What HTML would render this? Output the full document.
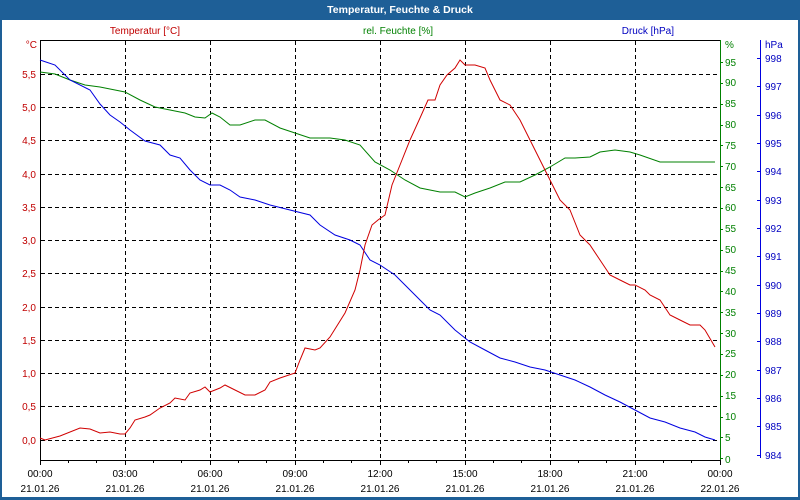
<!DOCTYPE html>
<html><head><meta charset="utf-8"><style>
html,body{margin:0;padding:0;width:800px;height:500px;overflow:hidden;background:#fff;}
</style></head><body>
<svg width="800" height="500" xmlns="http://www.w3.org/2000/svg" font-family="Liberation Sans, sans-serif" font-size="10">
<rect x="0" y="0" width="800" height="500" fill="#1e5f97"/>
<rect x="2" y="20" width="796" height="477" fill="#fff"/>
<text x="400" y="13" fill="#fff" font-weight="bold" text-anchor="middle" font-size="10.5">Temperatur, Feuchte &amp; Druck</text>
<text x="145" y="34" fill="#c00000" text-anchor="middle">Temperatur [°C]</text>
<text x="398" y="34" fill="#008000" text-anchor="middle">rel. Feuchte [%]</text>
<text x="674" y="34" fill="#0000c0" text-anchor="end">Druck [hPa]</text>
<g stroke="#000" stroke-dasharray="4,3" stroke-width="1">
<path d="M125.5 41V460M210.5 41V460M295.5 41V460M380.5 41V460M465.5 41V460M550.5 41V460M635.5 41V460"/>
<path d="M41 74.5H720M41 107.5H720M41 140.5H720M41 174.5H720M41 207.5H720M41 240.5H720M41 273.5H720M41 307.5H720M41 340.5H720M41 373.5H720M41 406.5H720M41 440.5H720"/>
</g>
<path d="M40.5 40.5H720.5M40.5 40V460.5H720" stroke="#000" fill="none"/>
<g stroke="#000"><path d="M40.5 460v5M68.5 460v3M96.5 460v3M125.5 460v5M153.5 460v3M181.5 460v3M210.5 460v5M238.5 460v3M266.5 460v3M295.5 460v5M323.5 460v3M351.5 460v3M380.5 460v5M408.5 460v3M436.5 460v3M465.5 460v5M493.5 460v3M521.5 460v3M550.5 460v5M578.5 460v3M606.5 460v3M635.5 460v5M663.5 460v3M691.5 460v3M720.5 460v5"/></g>
<path d="M720.5 40V460" stroke="#008000"/>
<path d="M760.5 40V458" stroke="#0000e0"/>
<g fill="#c00000" text-anchor="end">
<text x="37" y="48">°C</text>
<text x="36" y="78">5,5</text><text x="36" y="111">5,0</text><text x="36" y="144">4,5</text><text x="36" y="178">4,0</text><text x="36" y="211">3,5</text><text x="36" y="244">3,0</text><text x="36" y="277">2,5</text><text x="36" y="311">2,0</text><text x="36" y="344">1,5</text><text x="36" y="377">1,0</text><text x="36" y="410">0,5</text><text x="36" y="444">0,0</text>
</g>
<g fill="#008000"><text x="725" y="48">%</text>
<text x="725" y="66">95</text><text x="725" y="86">90</text><text x="725" y="107">85</text><text x="725" y="128">80</text><text x="725" y="149">75</text><text x="725" y="170">70</text><text x="725" y="191">65</text><text x="725" y="211">60</text><text x="725" y="232">55</text><text x="725" y="253">50</text><text x="725" y="274">45</text><text x="725" y="295">40</text><text x="725" y="316">35</text><text x="725" y="337">30</text><text x="725" y="357">25</text><text x="725" y="378">20</text><text x="725" y="399">15</text><text x="725" y="420">10</text><text x="725" y="441">5</text><text x="725" y="463">0</text></g>
<path stroke="#008000" d="M720 62.5h3M720 83.5h3M720 104.5h3M720 125.5h3M720 145.5h3M720 166.5h3M720 187.5h3M720 208.5h3M720 229.5h3M720 250.5h3M720 271.5h3M720 291.5h3M720 312.5h3M720 333.5h3M720 354.5h3M720 375.5h3M720 396.5h3M720 417.5h3M720 437.5h3M720 458.5h3"/>
<g fill="#0000c0"><text x="765" y="48">hPa</text>
<text x="765" y="62">998</text><text x="765" y="90">997</text><text x="765" y="119">996</text><text x="765" y="147">995</text><text x="765" y="175">994</text><text x="765" y="204">993</text><text x="765" y="232">992</text><text x="765" y="260">991</text><text x="765" y="289">990</text><text x="765" y="317">989</text><text x="765" y="345">988</text><text x="765" y="374">987</text><text x="765" y="402">986</text><text x="765" y="430">985</text><text x="765" y="459">984</text></g>
<path stroke="#0000e0" d="M757 58.5h3M757 86.5h3M757 115.5h3M757 143.5h3M757 171.5h3M757 200.5h3M757 228.5h3M757 256.5h3M757 285.5h3M757 313.5h3M757 341.5h3M757 370.5h3M757 398.5h3M757 426.5h3M757 455.5h3"/>
<g fill="#000" text-anchor="middle">
<text x="40" y="477">00:00</text><text x="125" y="477">03:00</text><text x="210" y="477">06:00</text><text x="295" y="477">09:00</text><text x="380" y="477">12:00</text><text x="465" y="477">15:00</text><text x="550" y="477">18:00</text><text x="635" y="477">21:00</text><text x="720" y="477">00:00</text>
<text x="40" y="492">21.01.26</text><text x="125" y="492">21.01.26</text><text x="210" y="492">21.01.26</text><text x="295" y="492">21.01.26</text><text x="380" y="492">21.01.26</text><text x="465" y="492">21.01.26</text><text x="550" y="492">21.01.26</text><text x="635" y="492">21.01.26</text><text x="720" y="492">22.01.26</text></g>
<g fill="none" stroke-width="1">
<polyline stroke="#008000" points="40,72 55,74 70,80 85,85 100,87 115,90 125,92 140,100 155,107 170,110 185,113 195,117 205,118 212,113 220,117 230,125 240,125 255,120 265,120 280,128 295,133 310,138 330,138 345,140 360,145 375,162 390,170 405,180 420,188 440,192 455,192 465,197 475,193 490,188 505,182 520,182 535,175 550,167 565,158 575,158 590,157 600,152 615,150 630,152 640,155 660,162 670,162 690,162 700,162 715,162"/>
<polyline stroke="#0000e0" points="40,60 55,65 70,80 90,90 100,104 110,115 120,122 130,130 145,141 160,145 170,155 180,158 190,170 200,180 210,185 220,185 230,190 240,197 255,200 270,205 290,210 310,215 320,225 335,235 350,240 360,245 370,260 380,265 395,275 405,285 420,300 430,310 440,315 455,330 470,342 485,350 500,358 515,362 530,367 545,370 560,375 575,380 590,387 605,395 620,402 635,410 650,418 665,422 680,428 695,432 705,437 715,440"/>
<polyline stroke="#d00000" points="40,438 45,440 60,436 80,428 90,429 100,433 110,432 120,434 125,434 130,428 135,420 145,417 150,415 160,408 170,403 175,398 185,400 190,393 200,390 205,387 210,392 220,388 225,385 235,390 245,395 255,395 265,390 270,382 280,378 295,373 300,360 305,348 315,350 320,348 330,337 345,313 355,290 360,270 365,245 372,225 378,220 385,215 392,185 400,165 410,140 420,118 428,100 435,100 440,85 447,75 455,68 460,60 465,65 475,65 485,68 490,80 500,100 510,105 520,120 530,140 540,160 550,180 560,200 570,210 580,235 590,245 600,260 610,275 620,280 630,285 635,285 645,290 650,295 660,300 670,315 680,320 690,325 700,325 705,330 715,347"/>
</g>
</svg>
</body></html>
